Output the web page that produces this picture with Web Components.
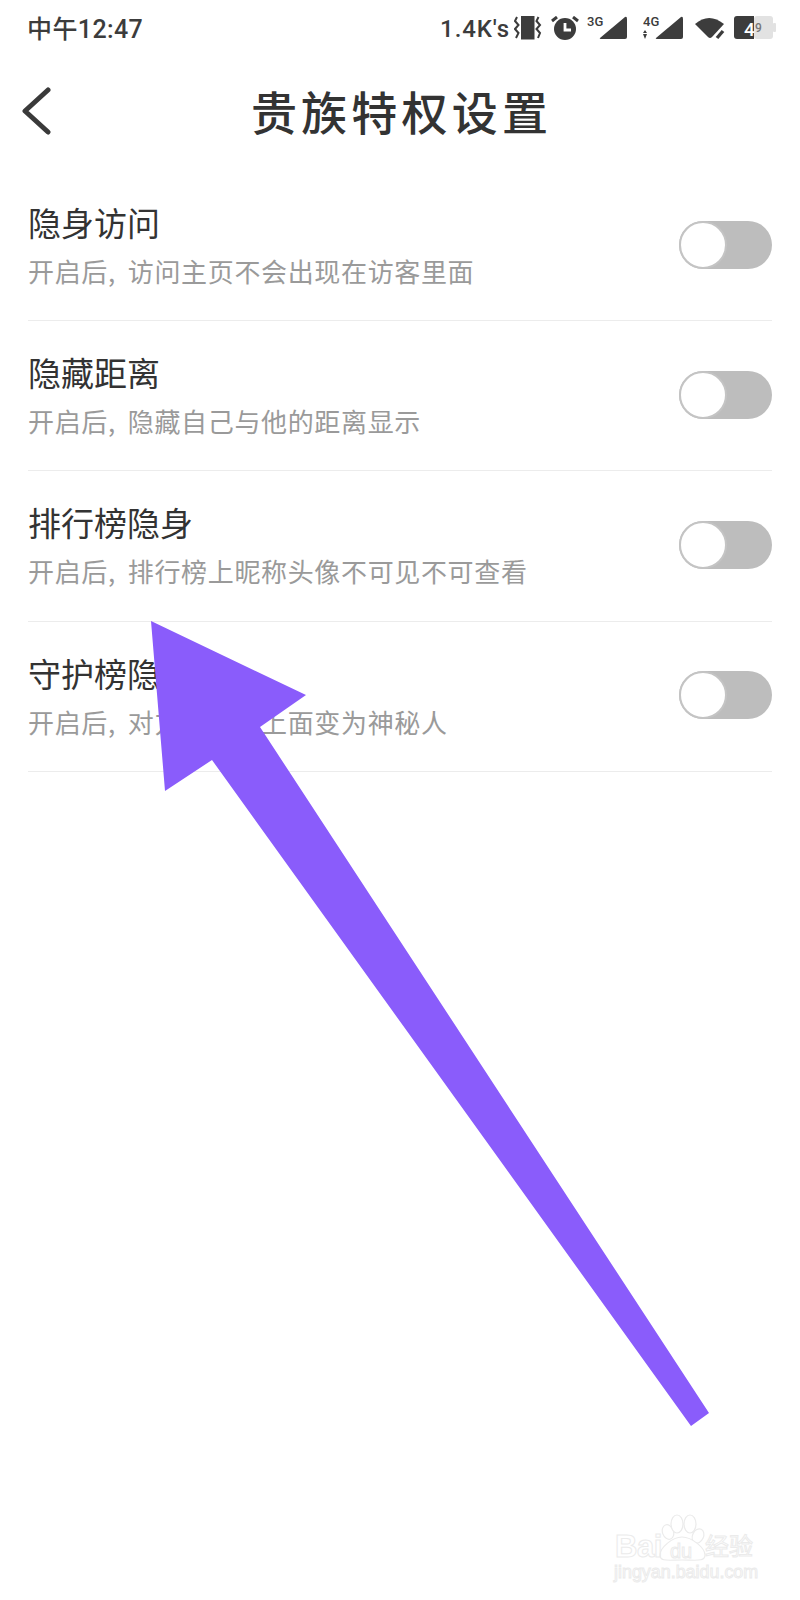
<!DOCTYPE html>
<html lang="zh">
<head>
<meta charset="utf-8">
<title>贵族特权设置</title>
<style>
  html, body { margin: 0; background: #fff; }
  body { font-family: "Noto Sans CJK SC", "Noto Sans", sans-serif; }
</style>
</head>
<body>
<privilege-screen>
  <status-bar></status-bar>
  <nav-header>贵族特权设置</nav-header>
  <setting-row label="隐身访问" hint="开启后, 访问主页不会出现在访客里面"></setting-row>
  <setting-row label="隐藏距离" hint="开启后, 隐藏自己与他的距离显示"></setting-row>
  <setting-row label="排行榜隐身" hint="开启后, 排行榜上昵称头像不可见不可查看"></setting-row>
  <setting-row label="守护榜隐身" hint="开启后, 对方在榜单上面变为神秘人"></setting-row>
</privilege-screen>
<script>
class StatusBar extends HTMLElement {
  constructor() {
    super();
    this.attachShadow({ mode: "open" });
    this.shadowRoot.innerHTML = `
<style>
:host { display: flex; align-items: center; height: 58px; padding: 0 24px 0 27px; color: #3c3c3c; }
.time { font: 500 25px/1 Roboto, "Noto Sans CJK SC", sans-serif; letter-spacing: .4px; flex: 1; }
.icons { display: flex; align-items: center; }
.speed { font: 500 24px/1 Roboto, sans-serif; letter-spacing: .9px; margin-right: 4px; }
svg { display: block; fill: #3c3c3c; }
svg text { font-family: Roboto, sans-serif; font-weight: 500; }
</style>
<span class="time">中午12:47</span>
<div class="icons">
  <span class="speed">1.4K's</span>
  <svg width="28" height="26" viewBox="0 0 28 26" style="margin-right:9px">
    <rect x="7" y="0" width="13.5" height="23.5"/>
    <path d="M3 1 L1 5 L4.5 9 L1 13 L4.5 17 L2 22 M24.5 1 L22.5 5 L26 9 L22.5 13 L26 17 L24 22" fill="none" stroke="#3c3c3c" stroke-width="2"/>
  </svg>
  <svg width="28" height="26" viewBox="0 0 28 26" style="margin-right:8px">
    <circle cx="14" cy="13" r="11"/>
    <path d="M14 7 V14 H20" fill="none" stroke="#fff" stroke-width="2.8"/>
    <path d="M1 5 L6 1 M27 5 L22 1" stroke="#3c3c3c" stroke-width="3" fill="none"/>
  </svg>
  <svg width="42" height="34" viewBox="0 -4 42 34" style="margin-right:14px">
    <text x="0" y="10" font-size="13">3G</text>
    <path d="M13 22 L38 1 Q40 0 40 3 V21 Q40 23 38 23 H14 Q12 23 13 22Z"/>
  </svg>
  <svg width="42" height="34" viewBox="0 -4 42 34" style="margin-right:9px">
    <text x="0" y="10" font-size="13">4G</text>
    <path d="M2 14 L4 17 H0Z M2 23 L0 18 H4Z" />
    <path d="M13 22 L38 1 Q40 0 40 3 V21 Q40 23 38 23 H14 Q12 23 13 22Z"/>
  </svg>
  <svg width="32" height="26" viewBox="0 0 32 26" style="margin-right:7px">
    <path d="M1 8 Q15 -4 30 8 L18 21 Q16 23 14 21Z"/>
    <path d="M23 22 L29 15" stroke="#3c3c3c" stroke-width="3.4" fill="none"/>
  </svg>
  <svg width="43" height="26" viewBox="0 0 43 26">
    <rect x="21" y="0" width="19" height="23" rx="3" fill="#e2e2e2"/>
    <rect x="40" y="7" width="3" height="9" rx="1" fill="#e2e2e2"/>
    <path d="M4 0 H21 V23 H4 Q1 23 1 20 V3 Q1 0 4 0Z"/>
    <text x="11" y="20" font-size="19" fill="#fff">4</text>
    <text x="22" y="16" font-size="12" fill="#777">9</text>
  </svg>
</div>`;
  }
}

class NavHeader extends HTMLElement {
  constructor() {
    super();
    this.attachShadow({ mode: "open" });
    this.shadowRoot.innerHTML = `
<style>
:host { display: block; position: relative; height: 113px; }
.bar { display: flex; align-items: center; justify-content: center; height: 104px; padding-left: 3px; }
.title { font-size: 46px; font-weight: 500; color: #333; letter-spacing: 4.2px; line-height: 1; }
svg { position: absolute; left: 22px; top: 29px; }
</style>
<svg width="30" height="48" viewBox="0 0 30 48"><path d="M26 3 L3 24 L26 45" fill="none" stroke="#3a3a3a" stroke-width="5" stroke-linecap="round" stroke-linejoin="round"/></svg>
<div class="bar"><span class="title"><slot></slot></span></div>`;
  }
}

class ToggleSwitch extends HTMLElement {
  constructor() {
    super();
    this.attachShadow({ mode: "open" });
    this.shadowRoot.innerHTML = `
<style>
:host { display: block; width: 93px; height: 48px; border-radius: 24px; background: #bdbdbd; position: relative; flex: none; }
.knob { position: absolute; left: 0; top: 0; width: 48px; height: 48px; box-sizing: border-box; border-radius: 50%; background: #fff; border: 2px solid #c4c4c4; }
</style>
<div class="knob"></div>`;
  }
}

class SettingRow extends HTMLElement {
  constructor() {
    super();
    this.attachShadow({ mode: "open" });
    this.shadowRoot.innerHTML = `
<style>
:host { display: flex; align-items: center; justify-content: space-between; box-sizing: border-box; height: 150.2px; margin: 0 28.5px 0 28px; padding-bottom: 2px; border-bottom: 1px solid #ececec; }
.label { font-size: 33px; line-height: 40px; color: #333; }
.hint { font-size: 26px; line-height: 36px; color: #9a9a9a; margin-top: 11px; letter-spacing: .65px; word-spacing: 5.5px; }
.text { margin-top: 2px; }
</style>
<div class="text">
  <div class="label"></div>
  <div class="hint"></div>
</div>
<toggle-switch></toggle-switch>`;
    this.shadowRoot.querySelector(".label").textContent = this.getAttribute("label");
    this.shadowRoot.querySelector(".hint").textContent = this.getAttribute("hint");
  }
}

class PrivilegeScreen extends HTMLElement {
  constructor() {
    super();
    this.attachShadow({ mode: "open" });
    this.shadowRoot.innerHTML = `
<style>
:host { display: block; position: relative; width: 800px; height: 1600px; overflow: hidden; background: #fff; }
.arrow { position: absolute; left: 0; top: 0; }
.mark { position: absolute; left: 612px; top: 1510px; width: 160px; height: 76px; color: transparent; font-family: "Liberation Sans", "Noto Sans CJK SC", sans-serif; -webkit-text-stroke: 1px #ebebeb; }
.mark span { position: absolute; white-space: nowrap; line-height: 1; }
.mark svg { position: absolute; left: 0; top: 0; }
</style>
<slot></slot>
<svg class="arrow" width="800" height="1600" viewBox="0 0 800 1600">
  <polygon fill="#8a5cfb" points="151,621 306,695 260,727 709,1413 691,1426 212,760 165,791"/>
</svg>
<div class="mark">
  <svg width="160" height="76" viewBox="0 0 160 76" fill="#fff" stroke="#ebebeb" stroke-width="1.2">
    <ellipse cx="56" cy="22" rx="5.5" ry="7.5" transform="rotate(-20 56 22)"/>
    <ellipse cx="65" cy="14" rx="6" ry="9"/>
    <ellipse cx="78" cy="14" rx="6" ry="9"/>
    <ellipse cx="86" cy="26" rx="5.5" ry="7.5" transform="rotate(25 86 26)"/>
    <path d="M70 27 C80 27 93 38 93 45 C93 52 84 50 70 50 C56 50 48 52 48 45 C48 38 60 27 70 27Z"/>
  </svg>
  <span style="left:3px;top:21px;font-size:31px;font-weight:700;letter-spacing:-.5px">Bai</span>
  <span style="left:58px;top:31px;font-size:20px">du</span>
  <span style="left:93px;top:25px;font-size:24px;letter-spacing:0">经验</span>
  <span style="left:2px;top:54px;font-size:17.9px">jingyan.baidu.com</span>
</div>`;
  }
}

customElements.define("status-bar", StatusBar);
customElements.define("nav-header", NavHeader);
customElements.define("toggle-switch", ToggleSwitch);
customElements.define("setting-row", SettingRow);
customElements.define("privilege-screen", PrivilegeScreen);
</script>
</body>
</html>
